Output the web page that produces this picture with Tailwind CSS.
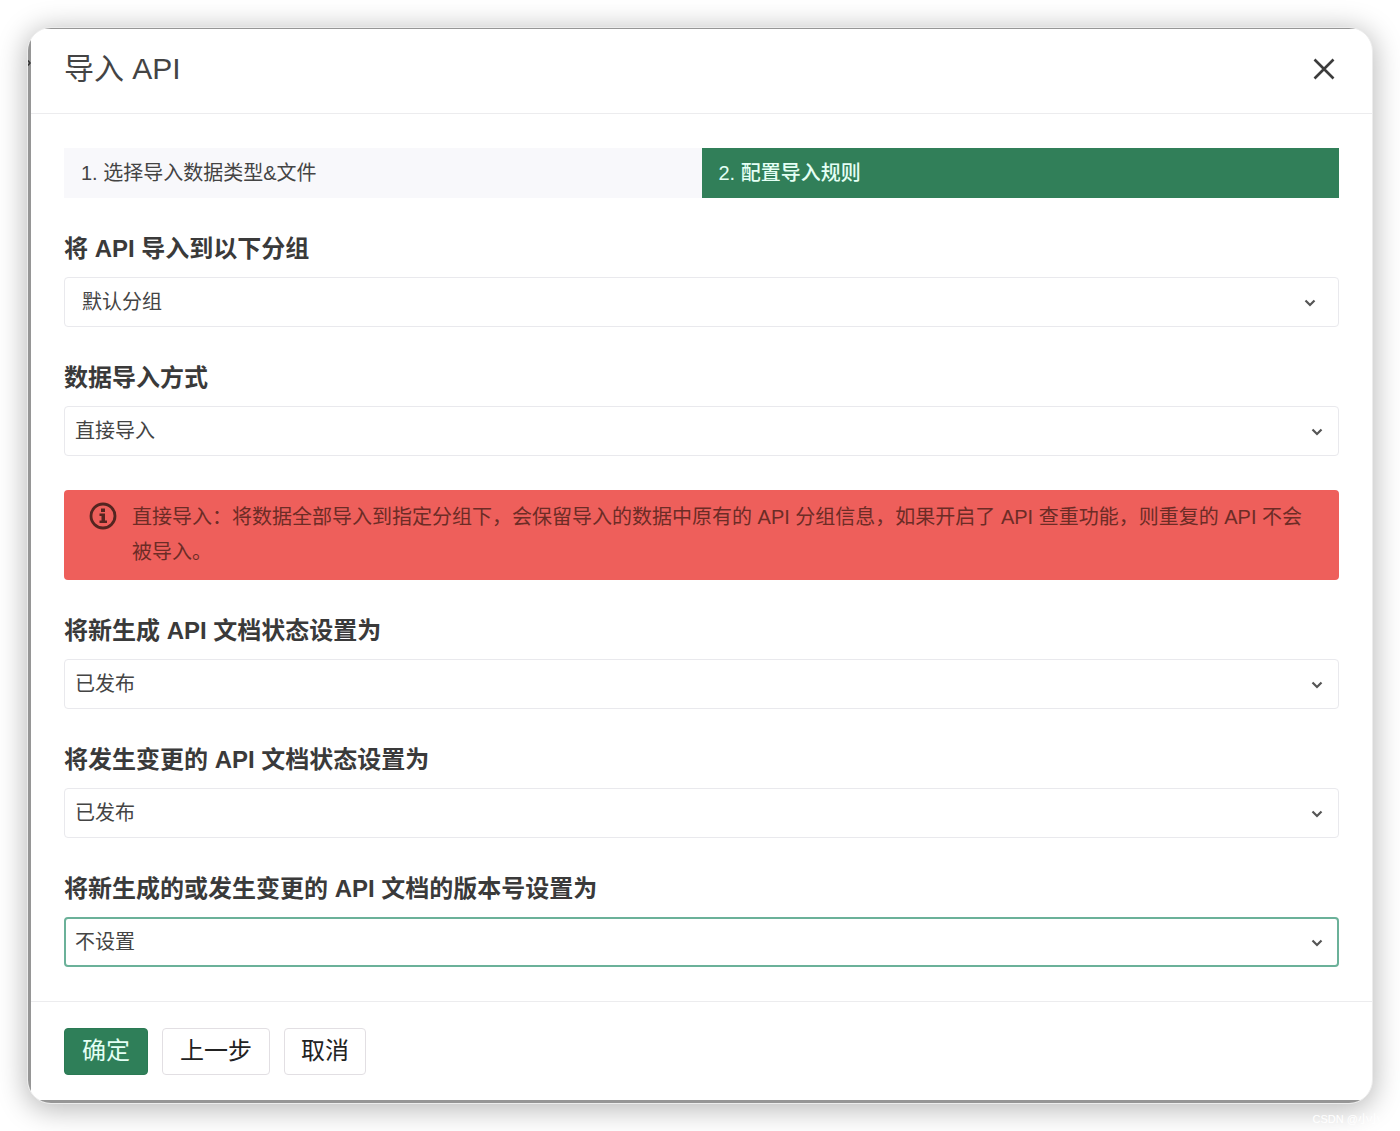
<!DOCTYPE html>
<html lang="zh-CN">
<head>
<meta charset="utf-8">
<meta name="viewport" content="width=device-width, initial-scale=1">
<title>导入 API</title>
<script src="https://cdn.jsdelivr.net/npm/@tailwindcss/browser@4"></script>
</head>
<body class="relative min-h-screen bg-white p-[27px] font-['Liberation_Sans','Noto_Sans_CJK_SC',sans-serif] text-xl text-[#444]">
<svg class="hidden"><symbol id="chevron" viewBox="0 0 12 8"><path d="M1.5 1.5 6 6l4.500-4.500" fill="none" stroke="#555" stroke-width="2.200"/></symbol></svg>

<div role="dialog" aria-labelledby="dialog-title" class="overflow-hidden rounded-3xl border border-[#ececec] bg-white shadow-[0_4px_28px_2px_rgba(0,0,0,0.28)]">
  <div class="relative border-t border-b-3 border-l-3 border-[#969696]">
    <svg class="absolute top-7 -left-[3px] h-3 w-[3px]" viewBox="0 0 3 12" aria-hidden="true"><path d="M0 3.500 2 6 0 8.500" fill="none" stroke="#333" stroke-width="1.500"/></svg>

    <header class="flex h-[85px] items-center justify-between border-b border-[#ececee] px-[33px] pb-1">
      <h1 id="dialog-title" class="text-[30px] leading-9">导入 API</h1>
      <button type="button" aria-label="关闭" class="-mr-px flex size-8 items-center justify-center">
        <svg class="size-6" viewBox="0 0 24 24" fill="none" stroke="#3c3c3c" stroke-width="2.600"><path d="M2.500 2.500l19 19M21.500 2.500l-19 19"/></svg>
      </button>
    </header>

    <main class="flex flex-col gap-[34px] px-[33px] py-[34px]">
      <ol class="grid h-[50px] grid-cols-2">
        <li class="flex items-center bg-[#f8f8fb] px-[17px]">1. 选择导入数据类型&amp;文件</li>
        <li class="flex items-center bg-[#317f59] px-[17px] font-medium text-[#e4fff5]" aria-current="step">2. 配置导入规则</li>
      </ol>

      <div class="flex flex-col gap-[11px]">
        <label for="group" class="text-2xl leading-[34px] font-bold text-[#3a3a3a]">将 API 导入到以下分组</label>
        <div class="relative">
          <select id="group" class="h-[50px] w-full appearance-none rounded border border-[#e9e9ed] bg-white px-[17px]"><option>默认分组</option></select>
          <svg class="pointer-events-none absolute top-[22px] right-[23px] h-2 w-3"><use href="#chevron"/></svg>
        </div>
      </div>

      <div class="flex flex-col gap-[11px]">
        <label for="mode" class="text-2xl leading-[34px] font-bold text-[#3a3a3a]">数据导入方式</label>
        <div class="relative">
          <select id="mode" class="h-[50px] w-full appearance-none rounded border border-[#e9e9ed] bg-white px-[10px]"><option>直接导入</option></select>
          <svg class="pointer-events-none absolute top-[22px] right-4 h-2 w-3"><use href="#chevron"/></svg>
        </div>
      </div>

      <div role="note" class="flex gap-[15px] rounded bg-[#ee5f5b] py-[10px] pr-[18px] pl-[25px] leading-[35px] text-[#6c2c26]">
        <svg class="mt-[2px] size-7 shrink-0" viewBox="0 0 28 28"><circle cx="14" cy="14" r="12" fill="none" stroke="#542520" stroke-width="2.800"/><path d="M12 6.500h4v3.500h-4zM10.500 11.500H16v7h2V21h-7.500v-2.500h2v-4.500h-2z" fill="#542520"/></svg>
        <p>直接导入：将数据全部导入到指定分组下，会保留导入的数据中原有的 API 分组信息，如果开启了 API 查重功能，则重复的 API 不会被导入。</p>
      </div>

      <div class="flex flex-col gap-[11px]">
        <label for="new-status" class="text-2xl leading-[34px] font-bold text-[#3a3a3a]">将新生成 API 文档状态设置为</label>
        <div class="relative">
          <select id="new-status" class="h-[50px] w-full appearance-none rounded border border-[#e9e9ed] bg-white px-[10px]"><option>已发布</option></select>
          <svg class="pointer-events-none absolute top-[22px] right-4 h-2 w-3"><use href="#chevron"/></svg>
        </div>
      </div>

      <div class="flex flex-col gap-[11px]">
        <label for="changed-status" class="text-2xl leading-[34px] font-bold text-[#3a3a3a]">将发生变更的 API 文档状态设置为</label>
        <div class="relative">
          <select id="changed-status" class="h-[50px] w-full appearance-none rounded border border-[#e9e9ed] bg-white px-[10px]"><option>已发布</option></select>
          <svg class="pointer-events-none absolute top-[22px] right-4 h-2 w-3"><use href="#chevron"/></svg>
        </div>
      </div>

      <div class="flex flex-col gap-[11px]">
        <label for="version" class="text-2xl leading-[34px] font-bold text-[#3a3a3a]">将新生成的或发生变更的 API 文档的版本号设置为</label>
        <div class="relative">
          <select id="version" class="h-[50px] w-full appearance-none rounded border-2 border-[#6bb199] bg-white px-[9px]"><option>不设置</option></select>
          <svg class="pointer-events-none absolute top-[22px] right-4 h-2 w-3"><use href="#chevron"/></svg>
        </div>
      </div>
    </main>

    <footer class="flex gap-[14px] border-t border-[#ececee] px-[33px] pt-[26px] pb-[25px] text-2xl leading-8">
      <button type="button" class="h-[47px] rounded border border-[#2b7a54] bg-[#2f7f59] px-[17px] pb-0.5 text-[#e4fff5]">确定</button>
      <button type="button" class="h-[47px] rounded border border-[#e2dfe3] bg-white px-[17px] pb-0.5 text-[#222]">上一步</button>
      <button type="button" class="h-[47px] rounded border border-[#e2dfe3] bg-white px-4 pb-0.5 text-[#222]">取消</button>
    </footer>
  </div>
</div>
<span class="absolute right-5 bottom-1 text-[11px] leading-4 text-white">CSDN @小小</span>
</body>
</html>
